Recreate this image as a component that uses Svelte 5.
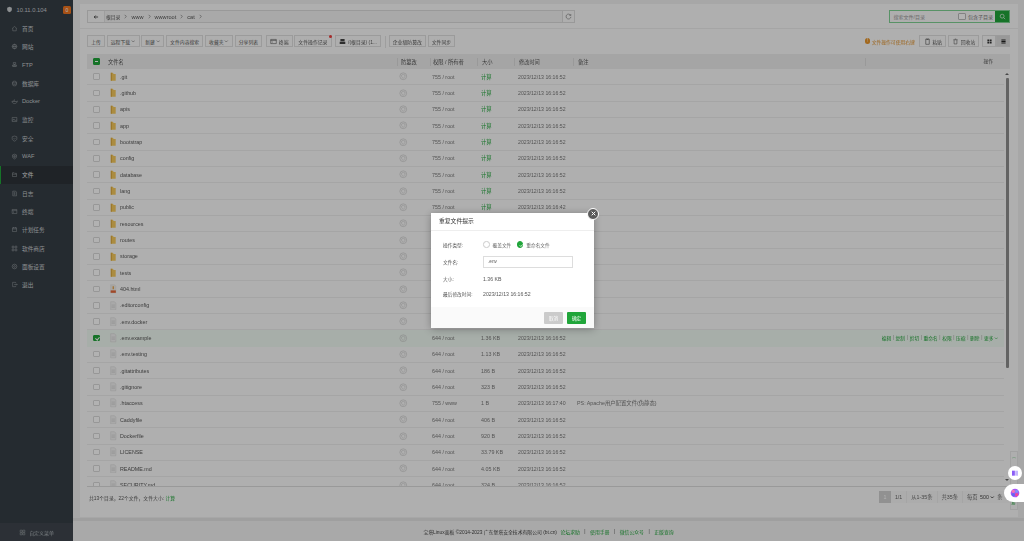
<script>
  const menu = [
    { label: '首页', icon: 'M2 6 6 2.500 10 6M3 5.500V10h6V5.500' },
    { label: '网站', icon: 'M6 2a4 4 0 1 0 0 8 4 4 0 0 0 0-8M2 6h8M6 2c-2 2.500-2 5.500 0 8M6 2c2 2.500 2 5.500 0 8' },
    { label: 'FTP', icon: 'M4 2.500h4v3H4zM2.500 7h7v1.500h-7zM2.500 9.500h7M6 5.500V7' },
    { label: '数据库', icon: 'M2.500 3.500c0-2 7-2 7 0v5c0 2-7 2-7 0zM2.500 3.500c0 2 7 2 7 0M2.500 6c0 2 7 2 7 0' },
    { label: 'Docker', icon: 'M1.500 6h8c1 0 1-1 1.500-1-.3 3-2.500 4.500-5 4.500-2.500 0-4-1.500-4.500-3.500zM3 4.500h1.500M5 4.500h1.500M5 3h1.500' },
    { label: '监控', icon: 'M2 2.500h8v7H2zM2 7h2l1-2 2 3 1-1h2' },
    { label: '安全', icon: 'M6 1.800 10 3v3.500c0 2-2 3.200-4 4-2-.8-4-2-4-4V3zM4.300 6 5.600 7.300 7.800 5' },
    { label: 'WAF', icon: 'M6 2 9.500 3.300V6c0 2-1.500 3.300-3.500 4.200C4 9.300 2.500 8 2.500 6V3.300zM4 4.300v3.200M6 3.500v5M8 4.300v3.200' },
    { label: '文件', icon: 'M2.500 3h3l1 1h3v5.500h-7zM2.500 5.500h7' },
    { label: '日志', icon: 'M3 2h5l1.500 1.500V10H3zM4.500 4.500h3M4.500 6.200h3M4.500 8h3' },
    { label: '终端', icon: 'M2 2.500h8v7H2zM2 4.500h8M3.500 6l1.200 1-1.200 1' },
    { label: '计划任务', icon: 'M2.500 3h7v6.500h-7zM2.500 5h7M4.300 2v1.800M7.700 2v1.800' },
    { label: '软件商店', icon: 'M2 2h3v3H2zM7 2h3v3H7zM2 7h3v3H2zM7 7h3v3H7z' },
    { label: '面板设置', icon: 'M6 2a4 4 0 1 0 0 8 4 4 0 0 0 0-8M6 4.500a1.500 1.500 0 1 0 0 3 1.500 1.500 0 0 0 0-3' },
    { label: '退出', icon: 'M8 3.500V2.300H2.800v7.400H8V8.500M5.500 6h5M9 4.500 10.500 6 9 7.500' }
  ];

  const tools = [
    { label: '上传' },
    { label: '远程下载', caret: true },
    { label: '新建', caret: true },
    { label: '文件内容搜索' },
    { label: '收藏夹', caret: true },
    { label: '分享列表' },
    { label: '终端', icon: 'term', gap: true },
    { label: '文件操作记录', dot: true },
    { label: '/(根目录) (1...', icon: 'disk', gap: true },
    { label: '企业级防篡改', split: true },
    { label: '文件同步' }
  ];

  const T = '2023/12/13 16:16:52';
  const dir = (name, time = T) => ({ name, kind: 'dir', perm: '755 / root', size: '计算', time });
  const file = (name, perm, size, extra = {}) => ({ name, kind: 'file', perm, size, time: T, ...extra });

  const rows = [
    dir('.git'), dir('.github'), dir('apis'), dir('app'), dir('bootstrap'), dir('config'),
    dir('database'), dir('lang'), dir('public', '2023/12/13 16:16:42'), dir('resources'),
    dir('routes'), dir('storage'), dir('tests'),
    file('404.html', '644 / root', '1.36 KB', { kind: 'html' }),
    file('.editorconfig', '644 / root', '258 B'),
    file('.env.docker', '644 / root', '1.36 KB'),
    file('.env.example', '644 / root', '1.36 KB', { selected: true }),
    file('.env.testing', '644 / root', '1.13 KB'),
    file('.gitattributes', '644 / root', '186 B'),
    file('.gitignore', '644 / root', '323 B'),
    file('.htaccess', '755 / www', '1 B', { time: '2023/12/13 16:17:40', note: 'PS: Apache用户配置文件(伪静态)' }),
    file('Caddyfile', '644 / root', '406 B'),
    file('Dockerfile', '644 / root', '920 B'),
    file('LICENSE', '644 / root', '33.79 KB'),
    file('README.md', '644 / root', '4.05 KB'),
    file('SECURITY.md', '644 / root', '324 B')
  ];

  const actions = ['编辑', '复制', '剪切', '重命名', '权限', '压缩', '删除'];
  const crumbs = ['根目录', 'www', 'wwwroot', 'cat'];
</script>

<div class="app">
  <aside class="side">
    <div class="host">
      <svg viewBox="0 0 12 12" class="logo"><path d="M6 1.200 10 2.800V6c0 2.400-1.800 3.900-4 4.800C3.800 9.900 2 8.400 2 6V2.800z" fill="#c9cdd0"/></svg>
      <span class="ip">10.11.0.104</span>
      <span class="badge">0</span>
    </div>
    <nav>
      {#each menu as m}
        <div class="item" class:active={m.label === '文件'}>
          <svg viewBox="0 0 12 12" class="mi"><path d={m.icon}/></svg>
          <span>{m.label}</span>
        </div>
      {/each}
    </nav>
    <div class="custom">
      <svg viewBox="0 0 12 12" class="mi"><path d="M2 2h3.500v3.500H2zM6.500 2H10v3.500H6.500zM2 6.500h3.500V10H2zM6.500 6.500H10V10H6.500z"/></svg>
      <span>自定义菜单</span>
    </div>
  </aside>

  <main class="main">
    <section class="card">
      <div class="pathrow">
        <div class="path">
          <button class="back" aria-label="back">
            <svg viewBox="0 0 10 10"><path d="M8.500 5H2M4.500 2.500 2 5l2.500 2.500" fill="none" stroke="#333" stroke-width="1.300"/></svg>
          </button>
          {#each crumbs as c}
            <span class="crumb" class:cjk={c === '根目录'}>{c}</span>
            <svg class="chev" viewBox="0 0 6 6"><path d="M2 1l2 2-2 2" fill="none" stroke="#777" stroke-width=".8"/></svg>
          {/each}
          <button class="refresh" aria-label="refresh">
            <svg viewBox="0 0 10 10"><path d="M8 3.200A3.500 3.500 0 1 0 8.500 5.500M8.300 1.500v2H6.300" fill="none" stroke="#666" stroke-width=".8"/></svg>
          </button>
        </div>
        <div class="search">
          <span class="ph">搜索文件/目录</span>
          <span class="sub"><i class="box"></i>包含子目录</span>
          <button class="go" aria-label="search">
            <svg viewBox="0 0 10 10"><circle cx="4.500" cy="4.500" r="2.800" fill="none" stroke="#fff" stroke-width=".9"/><path d="M6.600 6.600 8.800 8.800" stroke="#fff" stroke-width=".9"/></svg>
          </button>
        </div>
      </div>

      <div class="tools">
        {#each tools as t}
          <button class="btn" class:gap={t.gap} class:split={t.split}>
            {#if t.icon === 'term'}
              <svg viewBox="0 0 10 10" class="ti"><path d="M1 2h8v6H1zM1 3.500h8M2.500 5l1 .8-1 .8" fill="none" stroke="#333" stroke-width=".7"/></svg>
            {:else if t.icon === 'disk'}
              <svg viewBox="0 0 10 10" class="ti"><path d="M2 1.500h6v3H2zM1 5.500h8v3H1z" fill="#444"/></svg>
            {/if}
            {t.label}
            {#if t.caret}
              <svg viewBox="0 0 6 6" class="caret"><path d="M1 2l2 2 2-2" fill="none" stroke="#555" stroke-width=".7"/></svg>
            {/if}
            {#if t.dot}<i class="dot"></i>{/if}
          </button>
        {/each}
        <span class="tip"><i class="warn">!</i>文件操作可使用右键</span>
        <button class="btn">
          <svg viewBox="0 0 10 10" class="ti"><path d="M2.500 1.500h5v7.500h-5zM4 1v1.200h2V1" fill="none" stroke="#444" stroke-width=".8"/></svg>粘贴
        </button>
        <button class="btn">
          <svg viewBox="0 0 10 10" class="ti"><path d="M2 2.500h6M3 2.500v6h4v-6M4 1.500h2" fill="none" stroke="#555" stroke-width=".8"/></svg>回收站
        </button>
        <div class="views">
          <button class="view" aria-label="grid">
            <svg viewBox="0 0 10 10"><path d="M2 2h2.600v2.600H2zM5.400 2H8v2.600H5.400zM2 5.400h2.600V8H2zM5.400 5.400H8V8H5.400z" fill="#333"/></svg>
          </button>
          <button class="view on" aria-label="list">
            <svg viewBox="0 0 10 10"><path d="M2 2h6v1.600H2zM2 4.200h6v1.600H2zM2 6.400h6V8H2z" fill="#222"/></svg>
          </button>
        </div>
      </div>

      <div class="table">
        <div class="row head">
          <div class="c-check"><i class="cb part"></i></div>
          <div class="c-name">文件名</div>
          <div class="c-prot sep">防篡改</div>
          <div class="c-perm sep">权限 / 所有者</div>
          <div class="c-size sep">大小</div>
          <div class="c-time sep">修改时间</div>
          <div class="c-note sep">备注</div>
          <div class="c-act sep">操作</div>
        </div>
        <div class="rows">
          {#each rows as r}
            <div class="row" class:sel={r.selected}>
              <div class="c-check"><i class="cb" class:on={r.selected}></i></div>
              <div class="c-name">
                {#if r.kind === 'dir'}
                  <svg viewBox="0 0 8 11" class="fi"><path d="M1 .5h2.500L4.500 2H7v8.500H1z" fill="#f5c95c"/><path d="M1 .5h1.200v10H1z" fill="#d8a63a"/></svg>
                {:else if r.kind === 'html'}
                  <svg viewBox="0 0 8 11" class="fi"><path d="M.8.5h4.700L7.200 2.200v8.300H.8z" fill="#f1efea" stroke="#cfcfcf" stroke-width=".4"/><path d="M.8 7.500h6.400v3H.8z" fill="#e5673a"/><path d="M3.200 2.500h1.600v3.500H3.200z" fill="#e6a24a"/></svg>
                {:else}
                  <svg viewBox="0 0 8 11" class="fi"><path d="M.8.500h4.700L7.200 2.200v8.300H.8z" fill="#f2f2f2" stroke="#cdcdcd" stroke-width=".5"/><path d="M2 4.500h4M2 6h4M2 7.500h4" stroke="#c4c4c4" stroke-width=".5"/></svg>
                {/if}
                <span class="fname">{r.name}</span>
              </div>
              <div class="c-prot">
                <svg viewBox="0 0 10 10" class="pi"><circle cx="5" cy="5" r="4" fill="none" stroke="#bcbcbc" stroke-width=".6"/><path d="M5 2.700 7 3.500V5c0 1.100-.9 1.800-2 2.300C3.900 6.800 3 6.100 3 5V3.500z" fill="none" stroke="#bcbcbc" stroke-width=".5"/></svg>
              </div>
              <div class="c-perm">{r.perm}</div>
              <div class="c-size" class:link={r.size === '计算'}>{r.size}</div>
              <div class="c-time">{r.time}</div>
              <div class="c-note">{r.note ?? ''}</div>
              <div class="c-act">
                {#if r.selected}
                  {#each actions as a}<span class="act">{a}</span><span class="bar">|</span>{/each}<span class="act">更多</span>
                  <svg viewBox="0 0 6 6" class="caret"><path d="M1 2l2 2 2-2" fill="none" stroke="#20a53a" stroke-width=".7"/></svg>
                {/if}
              </div>
            </div>
          {/each}
        </div>
        <div class="scroll">
          <i class="up"></i>
          <i class="thumb"></i>
          <i class="down"></i>
        </div>
      </div>

      <div class="stats">
        <span>共13个目录，22个文件，文件大小: <b>计算</b></span>
        <div class="pager">
          <span class="cur">1</span>
          <span class="pg">1/1</span>
          <span class="pg">从1-35条</span>
          <span class="pg">共35条</span>
          <span class="pg last">每页 <span class="sel-box">500 <svg viewBox="0 0 6 6" class="caret"><path d="M1 2l2 2 2-2" fill="none" stroke="#222" stroke-width="1"/></svg></span> 条</span>
        </div>
      </div>
    </section>

    <footer class="foot">
      <span>宝塔Linux面板 ©2014-2023 广东堡塔安全技术有限公司 (bt.cn)</span>
      <a href="#f">论坛求助</a><span class="fbar">|</span>
      <a href="#f">使用手册</a><span class="fbar">|</span>
      <a href="#f">微信公众号</a><span class="fbar">|</span>
      <a href="#f">正版查询</a>
    </footer>
  </main>

  <div class="rail">
    <svg viewBox="0 0 10 10"><path d="M2 6a3.200 3.200 0 0 1 6 0L5 3.800z" fill="#20a53a"/></svg>
    <span class="railtext">客服</span>
  </div>

  <div class="mask"></div>

  <button class="bubble" aria-label="docs">
    <svg viewBox="0 0 12 12"><path d="M1.500 2.500h4.300v7.500H1.500z" fill="#8b5cf6"/><path d="M6.300 2.500h4.200v7.500H6.300z" fill="#c4b5fd"/></svg>
  </button>
  <button class="pill" aria-label="assistant">
    <svg viewBox="0 0 12 12">
      <circle cx="6" cy="6" r="5.200" fill="#a855f7"/>
      <circle cx="4" cy="4" r="2" fill="#f472b6"/>
      <circle cx="8" cy="4" r="2" fill="#818cf8"/>
      <circle cx="4" cy="8" r="2" fill="#6366f1"/>
      <circle cx="8" cy="8" r="2" fill="#ec4899"/>
    </svg>
  </button>

  <div class="modal">
    <div class="m-head">重复文件提示</div>
    <div class="m-body">
      <div class="f">
        <label for="t1">操作类型:</label>
        <div class="radios" id="t1">
          <span class="radio"><i class="r"></i>覆盖文件</span>
          <span class="radio"><i class="r on"><svg viewBox="0 0 8 8"><path d="M2 4l1.500 1.500L6 2.800" fill="none" stroke="#fff" stroke-width=".9"/></svg></i>重命名文件</span>
        </div>
      </div>
      <div class="f">
        <label for="nm">文件名:</label>
        <input id="nm" value=".env" />
      </div>
      <div class="f short"><span class="l">大小:</span><span class="v">1.36 KB</span></div>
      <div class="f short"><span class="l">最后修改时间:</span><span class="v">2023/12/13 16:16:52</span></div>
    </div>
    <div class="m-foot">
      <button class="cancel">取消</button>
      <button class="ok">确定</button>
    </div>
    <button class="close" aria-label="close">
      <svg viewBox="0 0 10 10"><path d="M3 3l4 4M7 3 3 7" stroke="#fff" stroke-width="1.100"/></svg>
    </button>
  </div>
</div>

<style>
  :global(body) {
    margin: 0;
    background: #f0f0f0;
  }
  .app {
    display: flex;
    width: 1024px;
    height: 541px;
    overflow: hidden;
    position: relative;
    font: 5.350px "Liberation Sans", "Noto Sans CJK SC", sans-serif;
    color: #666;
    filter: blur(.3px);
  }
  button {
    font: inherit;
    padding: 0;
    cursor: pointer;
  }
  i {
    font-style: normal;
  }

  .side {
    width: 73px;
    flex: none;
    display: flex;
    flex-direction: column;
    background: #363e45;
    color: #c8ccd0;
    font-size: 5.700px;
  }
  .host {
    display: flex;
    align-items: center;
    height: 18px;
    padding: 1px 2px 0 6px;
    box-sizing: border-box;
  }
  .logo {
    width: 7px;
    height: 7px;
    margin-right: 3.500px;
  }
  .ip {
    flex: 1;
    font-size: 5.800px;
  }
  .badge {
    width: 8px;
    height: 8px;
    border-radius: 1.500px;
    background: #f0741f;
    color: #fff;
    text-align: center;
    line-height: 8px;
    font-size: 5px;
  }
  nav {
    flex: 1;
    margin-top: 1px;
  }
  .item {
    display: flex;
    align-items: center;
    height: 18.340px;
    padding-left: 11px;
    gap: 4px;
  }
  .item.active {
    background: #2d3338;
    box-shadow: inset 1px 0 #20a53a;
    color: #e6e6e6;
  }
  .mi {
    width: 7px;
    height: 7px;
    flex: none;
    fill: none;
    stroke: #a9afb4;
    stroke-width: .8;
  }
  .custom {
    height: 18px;
    background: #3f464e;
    display: flex;
    align-items: center;
    justify-content: center;
    gap: 3px;
    font-size: 4.950px;
    color: #aab0b5;
  }

  .main {
    flex: 1;
    display: flex;
    flex-direction: column;
    min-width: 0;
  }
  .card {
    margin: 4px 6px 3.500px 7px;
    height: 513px;
    background: #fbfbfb;
    padding: 6px 8px 0 7px;
    box-sizing: border-box;
    display: flex;
    flex-direction: column;
  }
  .pathrow {
    display: flex;
    justify-content: space-between;
    padding: 0 8px 5px 7px;
    border-bottom: 1px solid #ececec;
    margin: 0 -8px 0 -7px;
  }
  .path {
    width: 488px;
    height: 13px;
    box-sizing: border-box;
    border: 1px solid #dcdcdc;
    background: #f2f2f2;
    display: flex;
    align-items: center;
    font-size: 5.600px;
    color: #555;
  }
  .crumb.cjk {
    font-size: 4.800px;
  }
  .back {
    width: 17px;
    height: 11px;
    border: 0;
    border-right: 1px solid #e3e3e3;
    background: #fafafa;
    display: grid;
    place-items: center;
    margin-right: 1px;
  }
  .back svg {
    width: 6px;
    height: 6px;
  }
  .chev {
    width: 5px;
    height: 5px;
    margin: 0 3px;
  }
  .refresh {
    margin-left: auto;
    width: 12px;
    height: 11px;
    border: 0;
    border-left: 1px solid #dcdcdc;
    background: #fafafa;
    display: grid;
    place-items: center;
  }
  .refresh svg {
    width: 7px;
    height: 7px;
  }
  .search {
    width: 121px;
    height: 13px;
    box-sizing: border-box;
    border: 1px solid #7fd193;
    display: flex;
    align-items: center;
    padding-left: 3.500px;
    background: #fafafa;
    color: #999;
  }
  .ph {
    flex: 1;
    font-size: 5px;
  }
  .sub {
    display: flex;
    align-items: center;
    gap: 2px;
    margin-right: 2px;
    font-size: 5px;
    color: #777;
  }
  .box {
    width: 5.500px;
    height: 5.500px;
    border: 1px solid #bbb;
    border-radius: 1px;
    background: #fff;
  }
  .go {
    width: 14px;
    height: 11px;
    background: #20a53a;
    border: 0;
    display: grid;
    place-items: center;
  }
  .go svg {
    width: 7px;
    height: 7px;
  }

  .tools {
    display: flex;
    align-items: center;
    height: 12px;
    margin-top: 6px;
    gap: 1.600px;
  }
  .btn {
    height: 12px;
    box-sizing: border-box;
    padding: 0 3.150px;
    border: 1px solid #dedede;
    background: #fafafa;
    color: #555;
    display: flex;
    align-items: center;
    gap: .8px;
    position: relative;
    white-space: nowrap;
    font-size: 4.850px;
  }
  .btn.gap {
    margin-left: 2px;
  }
  .btn.split {
    margin-left: 6px;
  }
  .btn.split::before {
    content: "";
    position: absolute;
    left: -5px;
    top: 0;
    height: 12px;
    border-left: 1px solid #e2e2e2;
  }
  .ti {
    width: 7px;
    height: 7px;
    margin-right: 1px;
  }
  .caret {
    width: 4.500px;
    height: 4.500px;
  }
  .dot {
    position: absolute;
    right: -1px;
    top: -1px;
    width: 3px;
    height: 3px;
    border-radius: 50%;
    background: #ef3b3b;
  }
  .tip {
    margin-left: auto;
    display: flex;
    align-items: center;
    gap: 1.500px;
    color: #e0912a;
    font-size: 4.800px;
    margin-right: 3px;
  }
  .warn {
    width: 5.500px;
    height: 5.500px;
    border-radius: 50%;
    background: #e8952a;
    color: #fff;
    text-align: center;
    line-height: 5.500px;
    font-size: 4.500px;
  }
  .views {
    display: flex;
    margin-left: 1px;
  }
  .view {
    width: 14px;
    height: 12px;
    box-sizing: border-box;
    border: 1px solid #dedede;
    background: #fafafa;
    display: grid;
    place-items: center;
  }
  .view.on {
    background: #dcdcdc;
  }
  .view svg {
    width: 7px;
    height: 7px;
  }

  .table {
    margin-top: 7px;
    height: 432px;
    overflow: hidden;
    position: relative;
    border-bottom: 1px solid #dcdcdc;
  }
  .row {
    display: grid;
    grid-template-columns: 21px 289px 33px 47px 37px 59px 292px 138px;
    align-items: center;
    height: 16.340px;
    box-sizing: border-box;
    border-bottom: 1px solid #ececec;
    margin-right: 6px;
  }
  .row > div {
    white-space: nowrap;
  }
  .head {
    height: 15px;
    margin-right: 0;
    background: #ececec;
    border: 0;
    font-size: 5.300px;
    grid-template-columns: 21px 289px 33px 47px 37px 59px 292px 144px;
  }
  .head .sep {
    border-left: 1px solid #dcdcdc;
    height: 8px;
    line-height: 8px;
  }
  .head .c-act {
    display: block;
    padding-right: 16px;
    text-align: right;
    box-sizing: border-box;
  }
  .rows .row.sel {
    background: #f0f9f2;
    border-color: #f0f9f2;
  }
  .c-check {
    padding-left: 6px;
    display: flex;
  }
  .cb {
    width: 6.500px;
    height: 6.500px;
    box-sizing: border-box;
    border: 1px solid #d8d8d8;
    border-radius: 1px;
    background: #fff;
    position: relative;
  }
  .cb.part {
    background: #20a53a;
    border-color: #20a53a;
  }
  .cb.part::after {
    content: "";
    position: absolute;
    left: .8px;
    right: .8px;
    top: 1.800px;
    height: 1px;
    background: #fff;
  }
  .cb.on {
    background: #20a53a;
    border-color: #20a53a;
  }
  .cb.on::after {
    content: "";
    position: absolute;
    left: 1.500px;
    top: .3px;
    width: 1.500px;
    height: 3px;
    border: solid #fff;
    border-width: 0 1px 1px 0;
    transform: rotate(40deg);
  }
  .c-name {
    display: flex;
    align-items: center;
    gap: 3.500px;
    color: #555;
  }
  .fi {
    width: 6.500px;
    height: 9.500px;
    flex: none;
    margin-left: 2px;
  }
  .c-prot {
    padding-left: 2px;
  }
  .head .c-prot {
    padding-left: 3px;
  }
  .pi {
    width: 8.500px;
    height: 8.500px;
    display: block;
  }
  .c-perm {
    padding-left: 2px;
    color: #777;
  }
  .c-size,
  .c-time,
  .c-note {
    padding-left: 4px;
    color: #777;
  }
  .c-time {
    font-size: 5.200px;
  }
  .head > div {
    color: #555;
  }
  .link {
    color: #20a53a;
  }
  .c-act {
    display: flex;
    justify-content: flex-end;
    align-items: center;
    color: #20a53a;
    padding-right: 5px;
    font-size: 4.750px;
  }
  .bar {
    color: #999;
    margin: 0 1.600px;
  }
  .scroll {
    position: absolute;
    right: 1px;
    top: 20px;
    bottom: 0;
    width: 4px;
  }
  .thumb {
    position: absolute;
    top: 4px;
    left: .5px;
    width: 3px;
    height: 290px;
    border-radius: 1px;
    background: #8e8e8e;
  }
  .up, .down {
    position: absolute;
    left: 0;
    border: 2px solid transparent;
  }
  .up {
    top: -3px;
    border-bottom-color: #666;
  }
  .down {
    bottom: 3px;
    border-top-color: #666;
  }

  .stats {
    display: flex;
    align-items: center;
    justify-content: space-between;
    padding: 4px 0 0 2px;
    color: #555;
    font-size: 4.850px;
  }
  .stats b {
    font-weight: 400;
    color: #20a53a;
  }
  .pager {
    display: flex;
    align-items: center;
    height: 12px;
    background: #f6f6f6;
    font-size: 5.300px;
  }
  .cur {
    width: 12px;
    height: 12px;
    line-height: 12px;
    text-align: center;
    background: #d0d0d0;
    color: #fff;
  }
  .pg {
    height: 12px;
    line-height: 12px;
    padding: 0 4px;
    border-right: 1px solid #ececec;
    color: #666;
    white-space: nowrap;
  }
  .pg.last {
    border: 0;
    padding-right: 0;
    width: 43px;
  }
  .sel-box {
    color: #444;
    margin: 0 1px;
  }

  .foot {
    flex: 1;
    display: flex;
    align-items: center;
    justify-content: center;
    gap: 3.500px;
    background: #f2f2f2;
    color: #444;
    padding-top: 2px;
    box-shadow: 0 -3px 0 #e4e4e4;
    white-space: nowrap;
    font-size: 4.850px;
  }
  .foot a {
    color: #20a53a;
    text-decoration: none;
  }
  .fbar {
    color: #555;
    margin: 0 1px;
  }

  .rail {
    position: absolute;
    right: 6px;
    top: 451px;
    width: 8px;
    height: 59px;
    background: #fafafa;
    border: 1px solid #e8e8e8;
    box-sizing: border-box;
    display: flex;
    flex-direction: column;
    align-items: center;
    justify-content: space-between;
    padding: 3px 0;
  }
  .rail svg {
    width: 6px;
    height: 6px;
  }
  .railtext {
    font-size: 4px;
    color: #20a53a;
    width: 5px;
    line-height: 1;
  }

  .mask {
    position: absolute;
    inset: 0;
    background: rgba(0, 0, 0, .3);
  }
  .bubble {
    position: absolute;
    left: 1008px;
    top: 466px;
    width: 14px;
    height: 14px;
    border-radius: 50%;
    background: #fff;
    border: 0;
    display: grid;
    place-items: center;
  }
  .bubble svg {
    width: 8px;
    height: 8px;
  }
  .pill {
    position: absolute;
    right: 0;
    top: 484px;
    width: 20px;
    height: 18px;
    border: 0;
    border-radius: 9px 0 0 9px;
    background: #fff;
    display: flex;
    align-items: center;
    padding-left: 5.500px;
  }
  .pill svg {
    width: 10px;
    height: 10px;
  }

  .modal {
    position: absolute;
    left: 431px;
    top: 213px;
    width: 163px;
    height: 115px;
    background: #fff;
    display: flex;
    flex-direction: column;
    box-shadow: 0 1px 8px rgba(0, 0, 0, .3);
    color: #555;
    font-size: 4.700px;
  }
  .m-head {
    height: 18px;
    box-sizing: border-box;
    line-height: 17px;
    padding-left: 8px;
    border-bottom: 1px solid #eee;
    font-size: 5.800px;
    color: #333;
  }
  .m-body {
    flex: 1;
    padding: 8px 12px 0;
  }
  .f {
    display: flex;
    align-items: center;
    height: 11px;
    margin-bottom: 6px;
  }
  .f.short {
    margin-bottom: 4.500px;
  }
  .f label, .l {
    width: 40px;
    flex: none;
  }
  .v {
    font-size: 5.200px;
  }
  .radios {
    display: flex;
    gap: 5.500px;
    color: #666;
  }
  .radio {
    display: flex;
    align-items: center;
    gap: 3px;
  }
  .r {
    width: 6.500px;
    height: 6.500px;
    box-sizing: border-box;
    border: 1px solid #ccc;
    border-radius: 50%;
  }
  .r.on {
    background: #20a53a;
    border-color: #20a53a;
    display: grid;
    place-items: center;
  }
  .r svg {
    width: 6.500px;
    height: 6.500px;
    flex: none;
  }
  input {
    width: 90px;
    height: 12px;
    box-sizing: border-box;
    border: 1px solid #ddd;
    padding: 0 4px;
    font: inherit;
    color: #555;
    outline: 0;
  }
  .m-foot {
    height: 21px;
    background: #fafafa;
    display: flex;
    justify-content: flex-end;
    align-items: center;
    gap: 4px;
    padding-right: 8px;
  }
  .m-foot button {
    width: 19px;
    height: 12px;
    border: 0;
    border-radius: 1px;
    color: #fff;
    font-size: 4.600px;
  }
  .cancel {
    background: #cbcbcb;
  }
  .ok {
    background: #20a53a;
  }
  .close {
    position: absolute;
    right: -5px;
    top: -5.500px;
    width: 12px;
    height: 12px;
    border-radius: 50%;
    background: #5c5c5c;
    border: 1px solid #fff;
    display: grid;
    place-items: center;
  }
  .close svg {
    width: 9px;
    height: 9px;
  }
</style>
